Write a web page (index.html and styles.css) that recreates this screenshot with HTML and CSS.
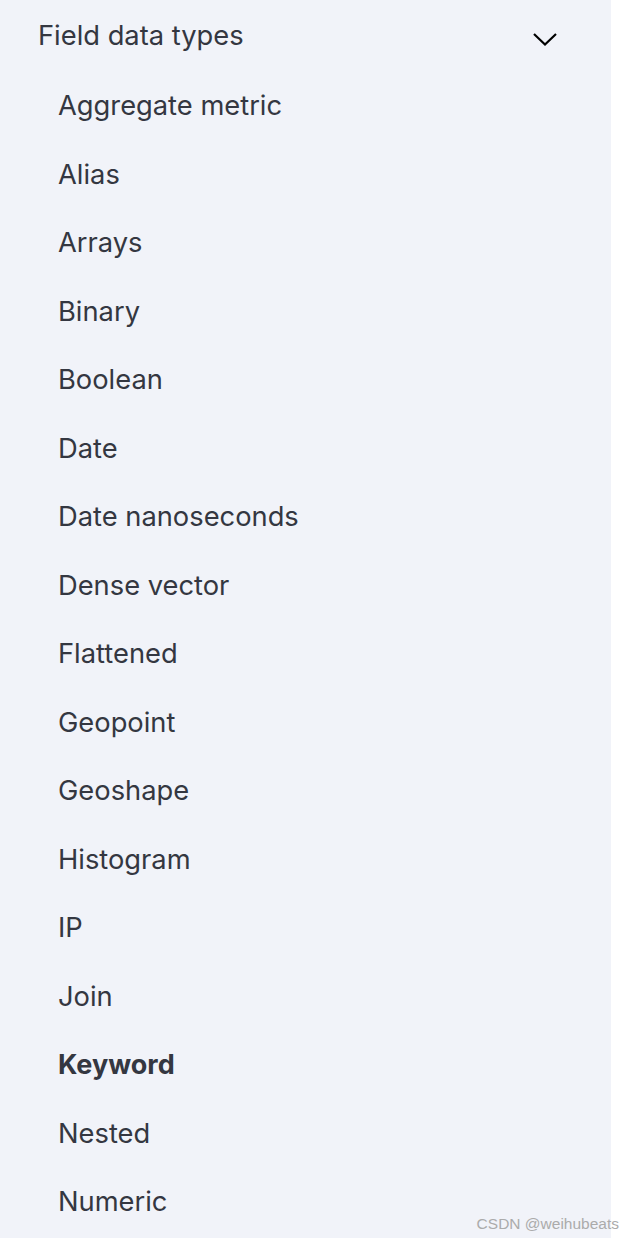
FILE: index.html
```html
<!DOCTYPE html>
<html>
<head>
<meta charset="utf-8">
<link rel="stylesheet" href="styles.css">
</head>
<body>
<nav class="panel">
  <div class="header">
    <span class="title">Field data types</span>
    <svg class="chevron" width="24" height="13" viewBox="0 0 24 13"><path d="M1 1 L12 11.5 L23 1" fill="none" stroke="#000" stroke-width="2.2"/></svg>
  </div>
  <ul class="items">
    <li>Aggregate metric</li>
    <li>Alias</li>
    <li>Arrays</li>
    <li>Binary</li>
    <li>Boolean</li>
    <li>Date</li>
    <li>Date nanoseconds</li>
    <li>Dense vector</li>
    <li>Flattened</li>
    <li>Geopoint</li>
    <li>Geoshape</li>
    <li>Histogram</li>
    <li>IP</li>
    <li>Join</li>
    <li class="active">Keyword</li>
    <li>Nested</li>
    <li>Numeric</li>
  </ul>
</nav>
<div class="watermark">CSDN @weihubeats</div>
</body>
</html>
```
FILE: styles.css
```css
html, body {
  margin: 0;
  padding: 0;
  background: #ffffff;
  height: 1238px;
  overflow: hidden;
}
body {
  font-family: Inter, "Noto Sans", sans-serif;
  color: #343741;
}
.panel {
  width: 611px;
  height: 1238px;
  background: #f1f3f9;
  box-sizing: border-box;
  padding: 0 0 0 38px;
}
.header {
  display: flex;
  align-items: center;
  justify-content: space-between;
  height: 72px;
  padding-right: 54px;
}
.title {
  font-size: 27.3px;
  line-height: 72px;
}
.chevron {
  margin-top: 6px;
}
.items {
  list-style: none;
  margin: 0;
  padding: 0 0 0 20px;
}
.items li {
  font-size: 27.3px;
  line-height: 68.5px;
  height: 68.5px;
}
.items li.active {
  font-weight: 700;
  font-size: 27px;
}
.watermark {
  position: absolute;
  right: 15px;
  bottom: 5px;
  font-family: "Liberation Sans", Arial, sans-serif;
  font-size: 15.5px;
  color: #ababab;
}
```
